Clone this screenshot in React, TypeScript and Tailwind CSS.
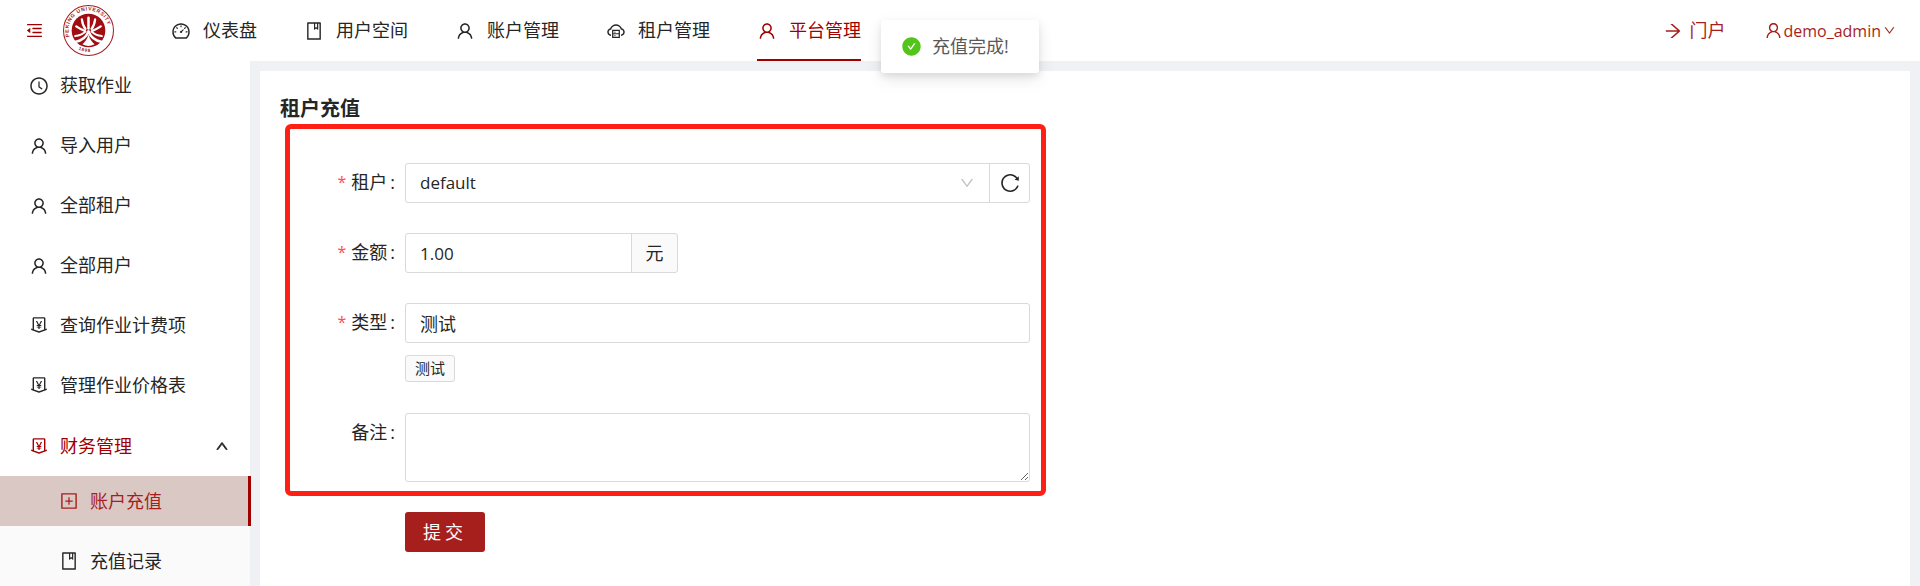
import type { ReactNode } from "react"
import {
  AiFillCheckCircle,
  AiOutlineArrowRight,
  AiOutlineBook,
  AiOutlineClockCircle,
  AiOutlineCloudServer,
  AiOutlineDashboard,
  AiOutlineDown,
  AiOutlineMenuFold,
  AiOutlineMoneyCollect,
  AiOutlinePlusSquare,
  AiOutlineReload,
  AiOutlineUp,
  AiOutlineUser,
} from "react-icons/ai"

const FONT = "font-['Open_Sans','Noto_Sans_CJK_SC',sans-serif]"

const NAV_ITEMS = [
  { label: "仪表盘", icon: <AiOutlineDashboard size={20} /> },
  { label: "用户空间", icon: <AiOutlineBook size={20} /> },
  { label: "账户管理", icon: <AiOutlineUser size={20} /> },
  { label: "租户管理", icon: <AiOutlineCloudServer size={20} /> },
  { label: "平台管理", icon: <AiOutlineUser size={20} />, active: true },
]

const SIDE_ITEMS = [
  { label: "获取作业", icon: <AiOutlineClockCircle size={20} /> },
  { label: "导入用户", icon: <AiOutlineUser size={20} /> },
  { label: "全部租户", icon: <AiOutlineUser size={20} /> },
  { label: "全部用户", icon: <AiOutlineUser size={20} /> },
  { label: "查询作业计费项", icon: <AiOutlineMoneyCollect size={20} /> },
  { label: "管理作业价格表", icon: <AiOutlineMoneyCollect size={20} /> },
]

function Logo() {
  return (
    <svg viewBox="0 0 100 100" className="h-[51px] w-[51px] shrink-0">
      <defs>
        <path id="sealTop" d="M13 62 A39 39 0 1 1 87 62" />
        <path id="sealBottom" d="M30 87 A43 43 0 0 0 70 87" />
      </defs>
      <circle cx="50" cy="50" r="49" fill="#fff" stroke="#a51c22" strokeWidth="2" />
      <circle cx="50" cy="50" r="33" fill="#a00d12" />
      <text fontSize="10" fill="#a51c22" fontWeight="700" letterSpacing="1.4" fontFamily="Liberation Sans, sans-serif">
        <textPath href="#sealTop">PEKING UNIVERSITY</textPath>
      </text>
      <text fontSize="9" fill="#a51c22" fontWeight="700" letterSpacing="1.5" fontFamily="Liberation Sans, sans-serif">
        <textPath href="#sealBottom">1898</textPath>
      </text>
      <g fill="none" stroke="#fff" strokeLinecap="round">
        <path d="M50 25 V46" strokeWidth="5" />
        <path d="M37 28 C38 36 40 42 44 47" strokeWidth="4.5" />
        <path d="M63 28 C62 36 60 42 56 47" strokeWidth="4.5" />
        <path d="M26 42 C32 46 37 49 43 51" strokeWidth="4.5" />
        <path d="M74 42 C68 46 63 49 57 51" strokeWidth="4.5" />
        <path d="M50 52 C46 62 36 70 25 72" strokeWidth="5" />
        <path d="M50 52 C54 62 64 70 75 72" strokeWidth="5" />
        <path d="M44 52 C40 56 33 60 24 61" strokeWidth="4" />
        <path d="M56 52 C60 56 67 60 76 61" strokeWidth="4" />
      </g>
      <path d="M50 58 C47 68 43 73 38 77 Q50 84 62 77 C57 73 53 68 50 58 Z" fill="#fff" />
    </svg>
  )
}

function Header() {
  return (
    <header className="relative z-10 flex h-[61px] items-center bg-white text-[18px] text-[#262626]">
      <AiOutlineMenuFold size={19} className="ml-[25px] text-[#a00000]" />
      <div className="ml-[19px]">
        <Logo />
      </div>
      <nav className="ml-[57px] flex h-full gap-[47px]">
        {NAV_ITEMS.map((item) => (
          <div
            key={item.label}
            className={
              item.active
                ? "flex h-full items-center gap-[12px] border-b-2 border-[#a00000] pt-[2px] text-[#a00000]"
                : "flex h-full items-center gap-[12px] border-b-2 border-transparent pt-[2px]"
            }
          >
            {item.icon}
            <span>{item.label}</span>
          </div>
        ))}
      </nav>
      <div className="ml-auto flex items-center text-[#a61f1d]">
        <AiOutlineArrowRight size={20} />
        <span className="ml-[6px]">门户</span>
        <AiOutlineUser size={19} className="ml-[39px]" />
        <span className="text-[16px]">demo_admin</span>
        <AiOutlineDown size={13} className="ml-[2px] mr-[24px]" />
      </div>
    </header>
  )
}

function Sidebar() {
  return (
    <aside className="flex w-[250px] shrink-0 flex-col bg-white text-[18px] text-[#262626]">
      {SIDE_ITEMS.map((item) => (
        <div key={item.label} className="mb-[10px] flex h-[50px] items-center gap-[11px] pl-[29px]">
          {item.icon}
          <span>{item.label}</span>
        </div>
      ))}
      <div className="mt-[1px] flex h-[50px] items-center gap-[11px] pl-[29px] text-[#a00000]">
        <AiOutlineMoneyCollect size={20} />
        <span>财务管理</span>
        <AiOutlineUp size={14} strokeWidth={60} className="ml-auto mr-[21px] text-[#262626]" />
      </div>
      <div className="mt-[5px] flex-1 bg-[#fafafa]">
        <div className="relative mr-[-1px] flex h-[50px] items-center gap-[11px] border-r-[3px] border-[#a00000] bg-[#dac8c5] pl-[59px] text-[#a61f1d]">
          <AiOutlinePlusSquare size={20} />
          <span>账户充值</span>
        </div>
        <div className="mt-[10px] flex h-[50px] items-center gap-[11px] pl-[59px]">
          <AiOutlineBook size={20} />
          <span>充值记录</span>
        </div>
      </div>
    </aside>
  )
}

function FormRow({ label, required, children }: { label: string; required?: boolean; children: ReactNode }) {
  return (
    <div className="flex items-start">
      <div className="flex h-[38px] w-[100px] items-center justify-end text-[18px] text-[#262626]">
        {required && <span className="mr-[5px] text-[16px] text-[#ff4d4f]">*</span>}
        <span>{label}</span>
        <span className="ml-[3px]">:</span>
      </div>
      <div className="ml-[10px] w-[625px]">{children}</div>
    </div>
  )
}

const INPUT = "h-[40px] w-full border border-[#d9d9d9] bg-white px-[14px] text-[17px] text-[#262626] outline-none"

function RechargeForm() {
  return (
    <form className="ml-[5px] flex h-[372px] w-[761px] flex-col gap-[30px] rounded-[6px] border-[5px] border-[#ff2015] pt-[34px] pl-[5px]">
      <FormRow label="租户" required>
        <div className="flex w-[625px]">
          <div className="flex h-[40px] flex-1 items-center justify-between rounded-l-[3px] border border-[#d9d9d9] px-[14px] text-[17px] text-[#262626]">
            <span>default</span>
            <AiOutlineDown size={16} className="text-[#bfbfbf]" />
          </div>
          <button type="button" className="-ml-px flex h-[40px] w-[41px] items-center justify-center rounded-r-[3px] border border-[#d9d9d9] text-[#262626]">
            <AiOutlineReload size={22} />
          </button>
        </div>
      </FormRow>
      <FormRow label="金额" required>
        <div className="flex w-[273px]">
          <input readOnly value="1.00" className={`${INPUT} min-w-0 flex-1 rounded-l-[3px]`} />
          <span className="-ml-px flex h-[40px] w-[47px] items-center justify-center rounded-r-[3px] border border-[#d9d9d9] bg-[#fafafa] text-[18px] text-[#262626]">
            元
          </span>
        </div>
      </FormRow>
      <FormRow label="类型" required>
        <input readOnly value="测试" className={`${INPUT} rounded-[3px] text-[18px]`} />
        <span className="mb-px mt-[12px] flex h-[27px] w-[50px] items-center justify-center rounded-[3px] border border-[#d9d9d9] bg-[#fafafa] text-[15px] text-[#262626]">
          测试
        </span>
      </FormRow>
      <FormRow label="备注">
        <textarea readOnly className="block h-[69px] w-full rounded-[3px] border border-[#d9d9d9] bg-white outline-none" />
      </FormRow>
    </form>
  )
}

export default function App() {
  return (
    <div className={`${FONT} flex h-[586px] w-[1920px] flex-col overflow-hidden bg-[#f0f1f5]`}>
      <Header />
      <div className="flex min-h-0 flex-1">
        <Sidebar />
        <main className="ml-[10px] mr-[10px] mt-[10px] flex-1 bg-white pt-[23px]">
          <h2 className="mb-px ml-[20px] h-[29px] text-[20px] font-bold leading-[29px] text-[#262626]">租户充值</h2>
          <div className="ml-[20px]">
            <RechargeForm />
            <button type="button" className="ml-[125px] mt-[16px] h-[40px] w-[80px] rounded-[3px] bg-[#a61f1d] text-[18px] tracking-[4px] text-white">
              提交
            </button>
          </div>
        </main>
      </div>
      <div className="absolute left-[881px] top-[20px] z-20 flex h-[53px] w-[158px] items-center rounded-[3px] bg-white pl-[20px] text-[18px] text-[#595959] shadow-[0_6px_16px_rgba(0,0,0,0.1),0_3px_6px_rgba(0,0,0,0.08)]">
        <AiFillCheckCircle size={21} className="text-[#52c41a]" />
        <span className="ml-[10px]">充值完成!</span>
      </div>
    </div>
  )
}
